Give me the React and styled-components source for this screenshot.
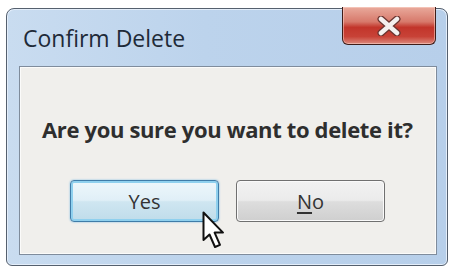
import styled, { createGlobalStyle } from 'styled-components';

const GlobalStyle = createGlobalStyle`
  html, body {
    margin: 0;
    background: #ffffff;
  }
  body {
    font-family: "Open Sans", "Noto Sans", sans-serif;
  }
`;

const Page = styled.div`
  width: 454px;
  height: 268px;
  padding: 8px 6px 2px 6px;
  box-sizing: border-box;
  position: relative;
  overflow: hidden;
`;

const Window = styled.div`
  width: 442px;
  height: 258px;
  box-sizing: border-box;
  border: 1px solid #55606e;
  border-radius: 8px 8px 6px 6px;
  background: linear-gradient(90deg, #c9dcf0 0%, #bcd3ec 45%, #b7cfea 100%);
  box-shadow: inset 0 0 0 1px #e4eefa;
  display: flex;
  flex-direction: column;
  padding: 0 10px 10px 12px;
`;

const TitleBar = styled.div`
  height: 57px;
  display: flex;
  justify-content: space-between;
  align-items: flex-start;
`;

const Title = styled.div`
  margin: 13px 0 0 4px;
  font-size: 23px;
  color: #1e2a38;
  letter-spacing: 0;
`;

const CloseButton = styled.div`
  width: 94px;
  height: 38px;
  margin: -2px 1px 0 0;
  box-sizing: border-box;
  border: 1px solid #3e1d19;
  border-top: none;
  border-radius: 0 0 6px 6px;
  background: linear-gradient(180deg, #e9aa9c 0%, #d7796b 40%, #c2352b 55%, #c84237 80%, #dc8a7d 100%);
  box-shadow: inset 0 0 0 1px rgba(255, 220, 210, 0.5);
  display: flex;
  align-items: center;
  justify-content: center;
`;

const Client = styled.div`
  flex: 1;
  background: #f0efec;
  border: 1px solid #7f8c9c;
  box-shadow: inset 0 0 0 1px #fbfbfa;
  display: flex;
  flex-direction: column;
  padding: 0 0 0 22px;
`;

const Message = styled.div`
  margin-top: 46px;
  font-size: 22px;
  font-weight: 700;
  color: #2e2e2e;
  letter-spacing: -0.35px;
  line-height: 32px;
`;

const ButtonRow = styled.div`
  display: flex;
  gap: 17px;
  margin: 35px 0 0 28px;
`;

const Button = styled.div`
  width: 149px;
  height: 42px;
  box-sizing: border-box;
  border-radius: 4px;
  border: 1px solid ${p => (p.$focused ? '#3f7ca8' : '#707070')};
  background: ${p =>
    p.$focused
      ? 'linear-gradient(180deg, #eef7fb 0%, #e0eff7 48%, #cfe6f1 52%, #bfdcea 100%)'
      : 'linear-gradient(180deg, #f2f2f2 0%, #ebebeb 48%, #dddddd 52%, #cfcfcf 100%)'};
  box-shadow: ${p =>
    p.$focused
      ? 'inset 0 0 0 2px #8fd0ee, 0 0 2px #6fb5e0'
      : 'inset 0 0 0 1px #fafafa'};
  display: flex;
  align-items: center;
  justify-content: center;
  font-size: 20px;
  color: #333333;
`;

const Mnemonic = styled.span`
  text-decoration: underline;
  text-underline-offset: 3px;
`;

const Cursor = styled.svg`
  position: absolute;
  left: 202px;
  top: 211px;
`;

const CloseIcon = () => (
  <svg width="26" height="20" viewBox="0 0 26 20">
    <path d="M5 3 L21 17 M21 3 L5 17" stroke="#6a3430" strokeWidth="7" strokeLinecap="round" />
    <path d="M5 3 L21 17 M21 3 L5 17" stroke="#f4f0ef" strokeWidth="4.5" strokeLinecap="round" />
  </svg>
);

export default function App() {
  return (
    <>
      <GlobalStyle />
      <Page>
        <Window>
          <TitleBar>
            <Title>Confirm Delete</Title>
            <CloseButton>
              <CloseIcon />
            </CloseButton>
          </TitleBar>
          <Client>
            <Message>Are you sure you want to delete it?</Message>
            <ButtonRow>
              <Button $focused>Yes</Button>
              <Button>
                <span><Mnemonic>N</Mnemonic>o</span>
              </Button>
            </ButtonRow>
          </Client>
        </Window>
        <Cursor width="24" height="40" viewBox="0 0 24 40">
          <path
            d="M1.5 1.5 L1.5 29 L7.5 23.5 L13 36 L18 33.8 L12.6 21.6 L21 21.6 Z"
            fill="#ffffff"
            stroke="#111111"
            strokeWidth="2"
            strokeLinejoin="round"
          />
        </Cursor>
      </Page>
    </>
  );
}
